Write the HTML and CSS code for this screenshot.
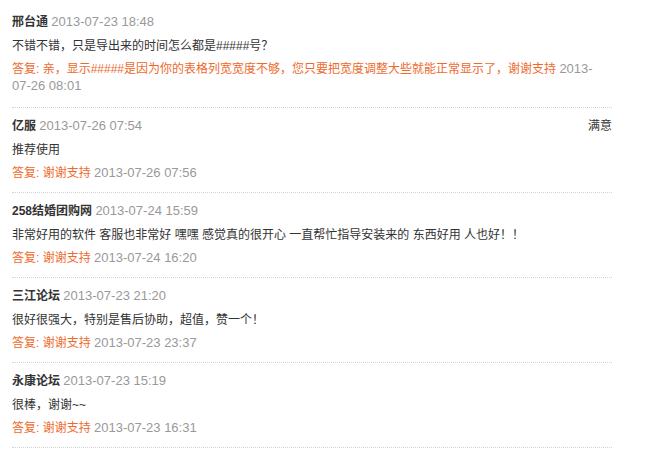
FILE: index.html
```html
<!DOCTYPE html>
<html lang="zh-CN">
<head>
  <meta charset="UTF-8" />
  <title>用户评价</title>
  <link rel="stylesheet" href="styles.css">
</head>
<body>

<div class="comments">
  <div class="item">
    <div class="head"><b>邢台通</b> <span class="time">2013-07-23 18:48</span></div>
    <div class="text">不错不错，只是导出来的时间怎么都是#####号？</div>
    <div class="reply">答复: 亲，显示#####是因为你的表格列宽宽度不够，您只要把宽度调整大些就能正常显示了，谢谢支持 <span class="time">2013-07-26 08:01</span></div>
  </div>

  <div class="item">
    <div class="head"><span class="rate">满意</span><b>亿服</b> <span class="time">2013-07-26 07:54</span></div>
    <div class="text">推荐使用</div>
    <div class="reply">答复: 谢谢支持 <span class="time">2013-07-26 07:56</span></div>
  </div>

  <div class="item">
    <div class="head"><b>258结婚团购网</b> <span class="time">2013-07-24 15:59</span></div>
    <div class="text">非常好用的软件 客服也非常好 嘿嘿 感觉真的很开心 一直帮忙指导安装来的 东西好用 人也好！！</div>
    <div class="reply">答复: 谢谢支持 <span class="time">2013-07-24 16:20</span></div>
  </div>

  <div class="item">
    <div class="head"><b>三江论坛</b> <span class="time">2013-07-23 21:20</span></div>
    <div class="text">很好很强大，特别是售后协助，超值，赞一个！</div>
    <div class="reply">答复: 谢谢支持 <span class="time">2013-07-23 23:37</span></div>
  </div>

  <div class="item">
    <div class="head"><b>永康论坛</b> <span class="time">2013-07-23 15:19</span></div>
    <div class="text">很棒，谢谢~~</div>
    <div class="reply">答复: 谢谢支持 <span class="time">2013-07-23 16:31</span></div>
  </div>
</div>

</body>
</html>
```

FILE: styles.css
```css
body {
  margin: 0; padding: 4px 12px;
  background: #fff; color: #333;
  font-family: "Liberation Sans", "Noto Sans CJK SC", sans-serif;
  font-size: 12px;
}
.comments { width: 600px; }
.item {
  padding: 10px 0 10px;
  border-bottom: 1px dotted #d4d4d4;
  line-height: 17px;
}
.item:first-child { padding-bottom: 12px; }
.head { margin-bottom: 7px; }
.head b { font-weight: bold; color: #333; }
.time { color: #999; font-size: 13px; line-height: 1; }
.rate { float: right; color: #333; }
.text { margin-bottom: 6px; }
.reply { color: #ee6a2c; padding-right: 5px; }
```
